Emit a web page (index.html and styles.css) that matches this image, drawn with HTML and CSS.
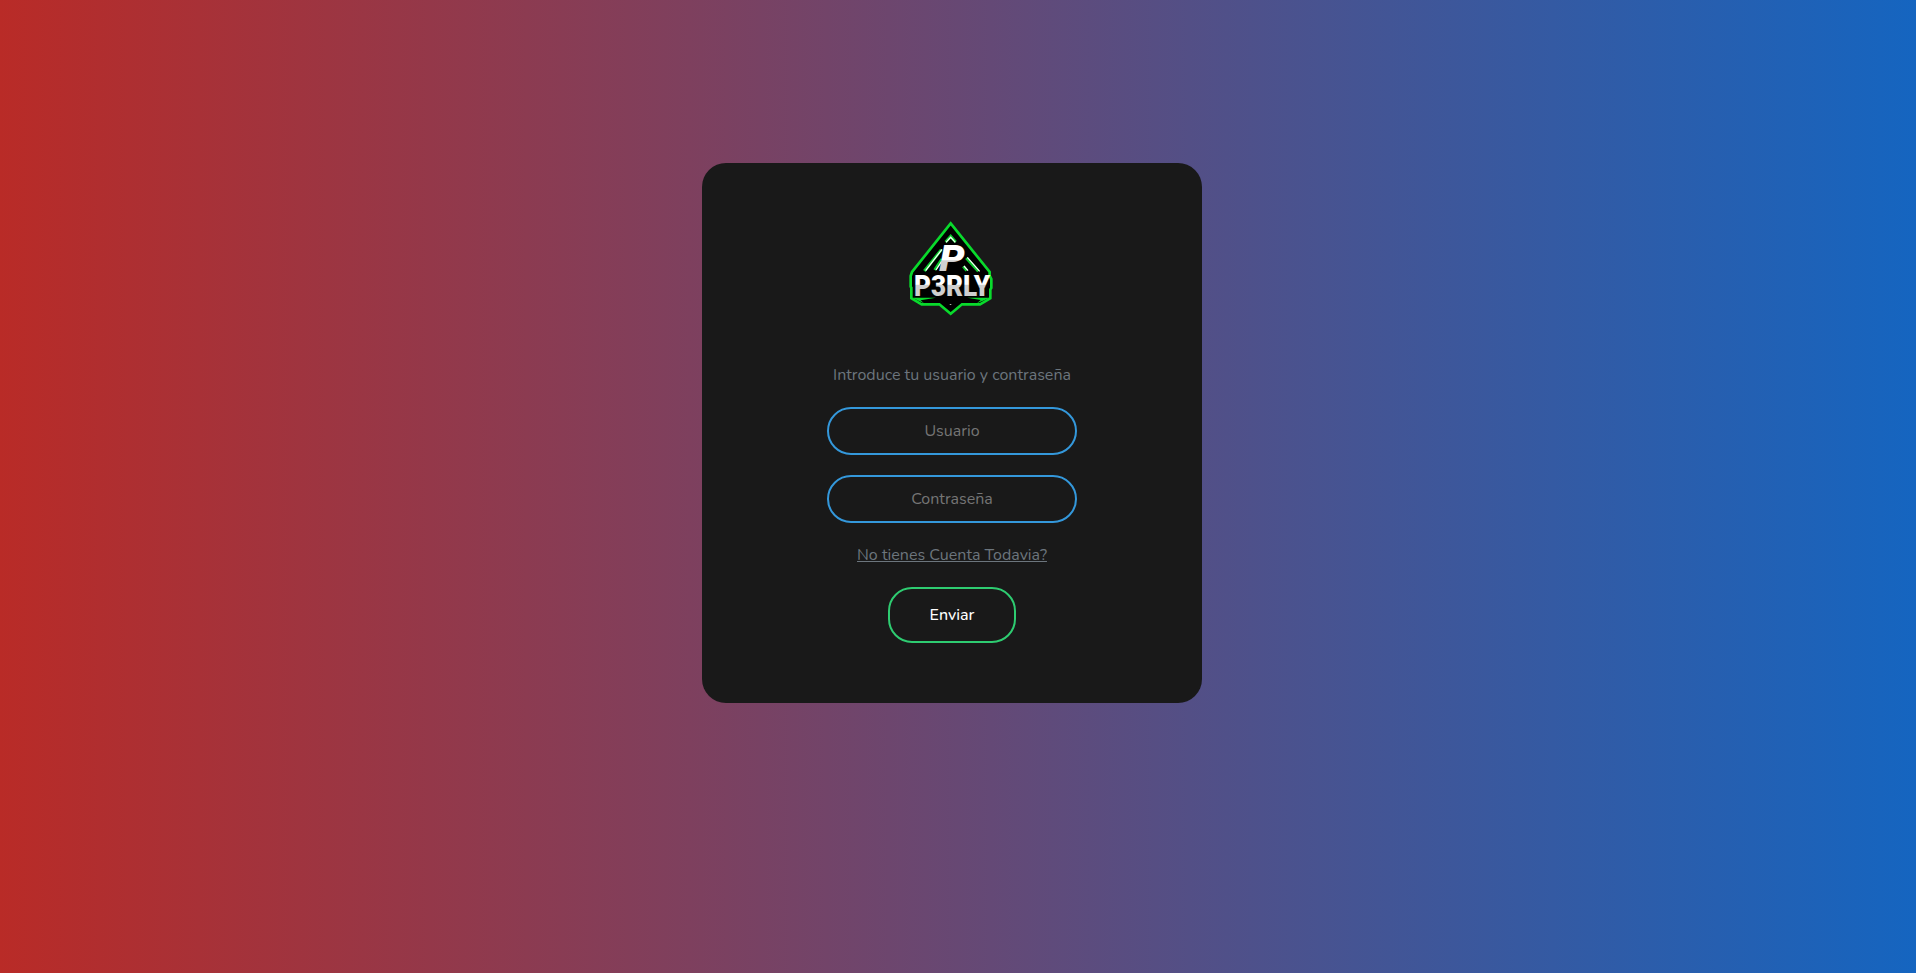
FILE: index.html
```html
<!DOCTYPE html>
<html lang="es">
<head>
<meta charset="utf-8">
<title>P3RLY</title>
<link rel="stylesheet" href="styles.css">
</head>
<body>
<main class="page">
  <form class="card">
    <svg class="logo" viewBox="0 0 300 315" role="img" aria-label="P3RLY">
      <defs>
        <linearGradient id="steel-initial" gradientUnits="userSpaceOnUse" x1="0" y1="92" x2="0" y2="170">
          <stop offset="0.54" stop-color="#fff"/>
          <stop offset="0.58" stop-color="#cfcfcf"/>
        </linearGradient>
        <linearGradient id="steel-word" gradientUnits="userSpaceOnUse" x1="0" y1="178" x2="0" y2="243">
          <stop offset="0.46" stop-color="#fff"/>
          <stop offset="0.5" stop-color="#cfcfcf"/>
        </linearGradient>
      </defs>
      <path class="shield" d="M152 25 L269 171 V182 L274 192 V219 L271 224 V250 L240 268 H186 L152 296 L118 268 H65 L34 250 V218 L32 215 V183 L36 171 Z"/>
      <path class="fin" d="M36 248 H108 L62 256 L72 265 Z M270 248 H202 L242 255 L231 265 Z"/>
      <path class="glow" d="M137 81 L152 64 L167 81 M124 104 L73 168 M126 132 L104 165 M199 129 L235 169 M190 154 L200 167"/>
      <path class="ray" d="M138 82 L152 67 L166 82 M126 103 L77 167 M125 139 L108 165 M202 127 L239 169 M192 153 L204 167"/>
      <text class="initial" x="118" y="168" textLength="76" lengthAdjust="spacingAndGlyphs">P</text>
      <text class="wordmark" x="42" y="243" textLength="228" lengthAdjust="spacingAndGlyphs">P3RLY</text>
      <path class="dot" d="M148 267 H155 L152 270 Z"/>
    </svg>
    <p class="hint">Introduce tu usuario y contraseña</p>
    <input class="field" type="text" placeholder="Usuario">
    <input class="field" type="password" placeholder="Contraseña">
    <a class="signup" href="#">No tienes Cuenta Todavia?</a>
    <button class="send" type="button">Enviar</button>
  </form>
</main>
</body>
</html>
```
FILE: styles.css
```css
* { box-sizing: border-box; }
body {
  margin: 0;
  font-family: "Nunito", "Open Sans", sans-serif;
  font-size: 16px;
  line-height: 24px;
}
.page {
  display: flex;
  justify-content: center;
  align-items: flex-start;
  height: 973px;
  padding: 163px 12px 0 0;
  background: linear-gradient(to right, #b92b27, #1565c0);
}
.card {
  display: flex;
  flex-direction: column;
  align-items: center;
  width: 500px;
  height: 540px;
  padding-top: 52px;
  border-radius: 24px;
  background: #191919;
}
.logo {
  display: block;
  width: 100px;
  height: 105px;
  margin-right: 4px;
}
.shield { fill: #000; stroke: #09da2c; stroke-width: 8; }
.fin { fill: #09da2c; }
.glow { fill: none; stroke: #08c92b; stroke-width: 9; }
.ray { fill: none; stroke: #f0fff0; stroke-width: 4; }
.dot { fill: #ddd; }
.initial, .wordmark {
  font-family: "Roboto", "Liberation Sans", sans-serif;
  font-weight: 900;
}
.initial {
  font-size: 108px;
  font-style: italic;
  fill: url(#steel-initial);
}
.wordmark {
  font-size: 91px;
  fill: url(#steel-word);
}
.hint {
  margin: 43px 0 0;
  color: #6c757d;
}
.field {
  width: 250px;
  height: 48px;
  margin-top: 20px;
  padding: 0 10px;
  border: 2px solid #3498db;
  border-radius: 24px;
  background: none;
  color: #fff;
  font: inherit;
  text-align: center;
}
.field::placeholder { color: #757575; opacity: 1; }
.signup {
  margin-top: 20px;
  color: #6c757d;
  text-decoration: underline;
}
.send {
  width: 128px;
  height: 56px;
  margin-top: 20px;
  padding: 0;
  border: 2px solid #2ecc71;
  border-radius: 24px;
  background: none;
  color: #fff;
  font: inherit;
  font-weight: 500;
}
```
